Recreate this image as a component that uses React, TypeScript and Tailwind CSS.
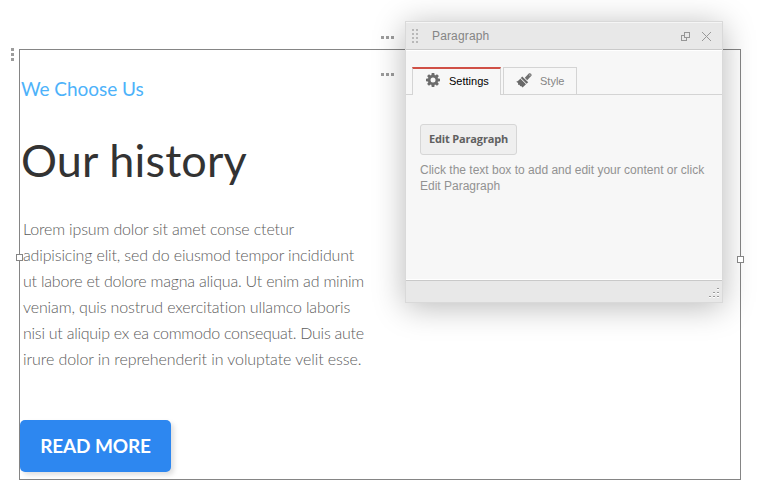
import React from "react";

const bodyLines = [
  { text: "Lorem ipsum dolor sit amet conse ctetur", spacing: "tracking-[-0.15px]" },
  { text: "adipisicing elit, sed do eiusmod tempor incididunt", spacing: "tracking-[-0.15px]" },
  { text: "ut labore et dolore magna aliqua. Ut enim ad minim", spacing: "tracking-[-0.21px]" },
  { text: "veniam, quis nostrud exercitation ullamco laboris", spacing: "tracking-[-0.13px]" },
  { text: "nisi ut aliquip ex ea commodo consequat. Duis aute", spacing: "tracking-[-0.25px]" },
  { text: "irure dolor in reprehenderit in voluptate velit esse.", spacing: "tracking-[-0.08px]" },
];

function Dots({ className }: { className: string }) {
  return (
    <div className={`absolute flex gap-[2px] ${className}`}>
      {[0, 1, 2].map((n) => (
        <span key={n} className="size-[3px] bg-[#9c9c9c]" />
      ))}
    </div>
  );
}

function Handle({ className }: { className: string }) {
  return <span className={`absolute size-[7px] border border-[#858585] bg-white ${className}`} />;
}

function Grip() {
  return (
    <svg width="6" height="14" viewBox="0 0 6 14" shapeRendering="crispEdges">
      {[0, 4, 8, 12].map((y) => (
        <path key={y} d={`M0 ${y}h2v2h-2zM4 ${y}h2v2h-2z`} fill="#b8b8b8" />
      ))}
    </svg>
  );
}

function Gear() {
  return (
    <svg width="14" height="14" viewBox="0 0 14 14">
      <g fill="#6b6b6b">
        {[0, 45, 90, 135].map((a) => (
          <path key={a} d="M5.7 0h2.6l.5 3v8l-.5 3H5.7l-.5-3V3z" transform={`rotate(${a} 7 7)`} />
        ))}
        <circle cx="7" cy="7" r="5" />
      </g>
      <circle cx="7" cy="7" r="2.5" fill="#f7f7f7" />
    </svg>
  );
}

function Brush() {
  return (
    <svg width="16" height="15" viewBox="0 0 16 15">
      <path d="M12.8.4c1.6-.9 3.4.8 2.6 2.4L11.2 7.2 8.8 4.8z" fill="#707070" />
      <path d="M6.2 3.4 12.2 9.3l-1.6 1.5L4.8 5z" fill="#686868" />
      <path d="M4.2 5.6 10 11.3 6.6 14.4 5.1 12.9 4.3 13.2 3.4 11.7 2 11.7 2.1 9.9.2 8.7C2 8.3 3.1 7.5 4.2 5.6z" fill="#686868" />
      <circle cx="13.9" cy="2" r=".6" fill="#f7f7f7" />
    </svg>
  );
}

function EditorPanel() {
  return (
    <section className="absolute left-[405px] top-[21px] flex h-[282px] w-[318px] flex-col border border-[#d9d9d9] bg-[#f7f7f7] font-['Liberation_Sans',Arial,sans-serif] text-xs shadow-[0_4px_30px_rgba(0,0,0,0.28)]">
      <header className="flex h-[28px] shrink-0 items-center border-b border-[#cacaca] border-t border-t-[#f5f5f5] bg-[#e8e8e8] pl-[6px] pr-[10px]">
        <Grip />
        <h2 className="ml-[14px] grow tracking-[0.15px] text-[#858585]">Paragraph</h2>
        <svg className="mr-[11px]" width="9" height="9" viewBox="0 0 9 9" fill="none" stroke="#969696" shapeRendering="crispEdges">
          <path d="M3.5.5h5v5h-5zM3 3.5H.5v5h5V6" />
        </svg>
        <svg width="11" height="11" viewBox="0 0 11 11" fill="none" stroke="#999">
          <path d="m1 1 9 9m0-9-9 9" />
        </svg>
      </header>
      <nav className="flex h-[45px] shrink-0 items-end border-t border-white">
        <span className="w-[6px] self-stretch border-b border-[#d4d4d4]" />
        <button className="flex h-[28px] w-[89px] items-center border-x border-t-2 border-x-[#d4d4d4] border-t-[#d05046] pb-[4px] pl-[13px] text-[11px] text-black">
          <Gear />
          <span className="ml-[9px] pt-[2px]">Settings</span>
        </button>
        <span className="w-[2px] self-stretch border-b border-[#d4d4d4]" />
        <button className="flex h-[28px] w-[74px] items-center border border-[#d4d4d4] pb-[2px] pl-[12px] text-[11px] text-[#858585]">
          <Brush />
          <span className="ml-[8px] pt-[2px]">Style</span>
        </button>
        <span className="grow self-stretch border-b border-[#d4d4d4]" />
      </nav>
      <div className="grow px-[14px] pt-[29px]">
        <button className="flex h-[31px] w-[97px] items-center justify-center rounded-[3px] border border-[#d6d6d6] bg-[#efefef] font-['Open_Sans',sans-serif] text-[11px] font-bold tracking-[-0.15px] text-[#606060]">
          Edit Paragraph
        </button>
        <p className="mt-[7px] whitespace-nowrap leading-4 text-[#929292]">
          Click the text box to add and edit your content or click
          <br />
          Edit Paragraph
        </p>
      </div>
      <footer className="flex h-[23px] shrink-0 border-t border-white bg-[#e8e8e8]">
        <div className="flex h-full w-full items-end justify-end border-t border-[#c9c9c9] pb-[4px] pr-[3px]">
          <svg width="10" height="10" viewBox="0 0 10 10" fill="#999" shapeRendering="crispEdges">
            <path d="M8 0h2v1H8zM4 4h2v1H4zM8 4h2v1H8zM0 8h2v1H0zM4 8h2v1H4zM8 8h2v1H8z" />
            <path d="M8 1h2v1H8zM4 5h2v1H4zM8 5h2v1H8zM0 9h2v1H0zM4 9h2v1H4zM8 9h2v1H8z" fill="#fff" />
          </svg>
        </div>
      </footer>
    </section>
  );
}

export default function App() {
  return (
    <div className="relative h-[498px] w-[758px] overflow-hidden bg-white pl-[19px] pt-[49px] font-[Lato,sans-serif]">
      <main className="relative flex h-[431px] w-[722px] flex-col border border-[#858585]">
        <p className="ml-[1px] mt-[27px] whitespace-nowrap text-[19px] leading-6 tracking-[-0.05px] text-[#4db2fa]">We Choose Us</p>
        <h1 className="ml-[1px] mt-[31px] whitespace-nowrap text-[45px] leading-[56px] tracking-[0.15px] text-[#333]">Our history</h1>
        <div className="ml-[3px] mt-[28px] whitespace-nowrap text-[16px] font-light leading-[26px] text-[#5c5c5c]">
          {bodyLines.map((line) => (
            <p key={line.text} className={line.spacing}>{line.text}</p>
          ))}
        </div>
        <button className="mt-[48px] h-[52px] w-[151px] rounded-[5px] bg-[#2d87f0] text-[19px] font-bold tracking-[-0.15px] text-white shadow-[3px_3px_5px_rgba(0,0,0,0.13)]">
          READ MORE
        </button>
      </main>
      <Dots className="left-[11px] top-[48px] flex-col" />
      <Dots className="left-[381px] top-[36px]" />
      <Dots className="left-[381px] top-[73px]" />
      <EditorPanel />
      <Handle className="left-[16px] top-[254px]" />
      <Handle className="left-[737px] top-[256px]" />
    </div>
  );
}
